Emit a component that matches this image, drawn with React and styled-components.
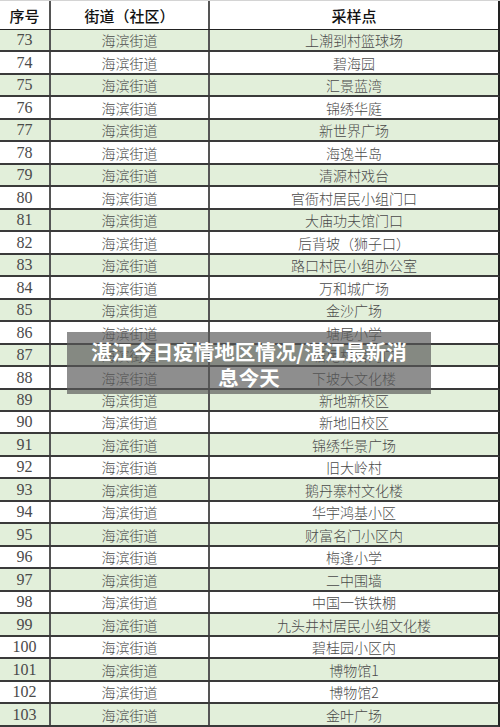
import React from "react";
import styled, {createGlobalStyle} from "styled-components";

const rows = [
  [73, "上潮到村篮球场"],
  [74, "碧海园"],
  [75, "汇景蓝湾"],
  [76, "锦绣华庭"],
  [77, "新世界广场"],
  [78, "海逸半岛"],
  [79, "清源村戏台"],
  [80, "官衙村居民小组门口"],
  [81, "大庙功夫馆门口"],
  [82, "后背坡（狮子口）"],
  [83, "路口村民小组办公室"],
  [84, "万和城广场"],
  [85, "金沙广场"],
  [86, "塘尾小学"],
  [87, "塘尾村居门口"],
  [88, "下坡大文化楼"],
  [89, "新地新校区"],
  [90, "新地旧校区"],
  [91, "锦绣华景广场"],
  [92, "旧大岭村"],
  [93, "鹅丹寨村文化楼"],
  [94, "华宇鸿基小区"],
  [95, "财富名门小区内"],
  [96, "梅逢小学"],
  [97, "二中围墙"],
  [98, "中国一铁铁棚"],
  [99, "九头井村居民小组文化楼"],
  [100, "碧桂园小区内"],
  [101, "博物馆1"],
  [102, "博物馆2"],
  [103, "金叶广场"],
];

const GlobalStyle = createGlobalStyle`
  body {
    margin: 0;
    background: #ffffff;
  }
`;

const Page = styled.div`
  position: relative;
  width: 500px;
  height: 727px;
  overflow: hidden;
  border-top: 1px solid #d4d4d4;
  box-sizing: border-box;
  font-family: "Liberation Serif", "Noto Sans CJK SC", serif;
`;

const Row = styled.div`
  display: grid;
  grid-template-columns: 51px 159px 1fr;
  height: ${(p) => p.$h}px;
  box-sizing: border-box;
  border-bottom: ${(p) => (p.$head ? "1px solid #222" : "2px solid #3a3a3a")};
  border-right: 2px solid #222;
  background: ${(p) => (p.$green ? "#e2efda" : "#ffffff")};
`;

const Cell = styled.div`
  display: flex;
  align-items: center;
  justify-content: center;
  border-right: ${(p) => (p.$last ? "none" : "2px solid #555")};
  color: #4a4a4a;
  font-size: ${(p) => (p.$num ? "16px" : "14px")};
  font-family: ${(p) =>
    p.$num
      ? '"Liberation Serif", serif'
      : '"Noto Sans CJK SC", sans-serif'};
  font-weight: 300;
  white-space: nowrap;
`;

const HeadCell = styled(Cell)`
  color: #111;
  font-size: 15px;
  font-weight: 500;
  font-family: "Noto Sans CJK SC", sans-serif;
  padding-top: 1px;
`;

const Overlay = styled.div`
  position: absolute;
  left: 67px;
  top: 331px;
  width: 364px;
  height: 62px;
  box-sizing: border-box;
  padding: 6px 20px 0;
  background: rgba(88, 88, 88, 0.68);
  color: #ffffff;
  font-family: "Noto Sans CJK SC", sans-serif;
  font-weight: 700;
  font-size: 20.5px;
  line-height: 26px;
  text-align: center;
`;

function rowHeight(i) {
  const pitch = 22.47;
  return Math.round(28 + (i + 1) * pitch) - Math.round(28 + i * pitch);
}

export default function App() {
  return (
    <Page>
      <GlobalStyle />
      <Row $head $h={29}>
        <HeadCell>序号</HeadCell>
        <HeadCell>街道（社区）</HeadCell>
        <HeadCell $last>采样点</HeadCell>
      </Row>
      {rows.map(([num, place], i) => (
        <Row key={num} $green={i % 2 === 0} $h={rowHeight(i)}>
          <Cell $num>{num}</Cell>
          <Cell>海滨街道</Cell>
          <Cell $last>{place}</Cell>
        </Row>
      ))}
      <Overlay>湛江今日疫情地区情况/湛江最新消息今天</Overlay>
    </Page>
  );
}
